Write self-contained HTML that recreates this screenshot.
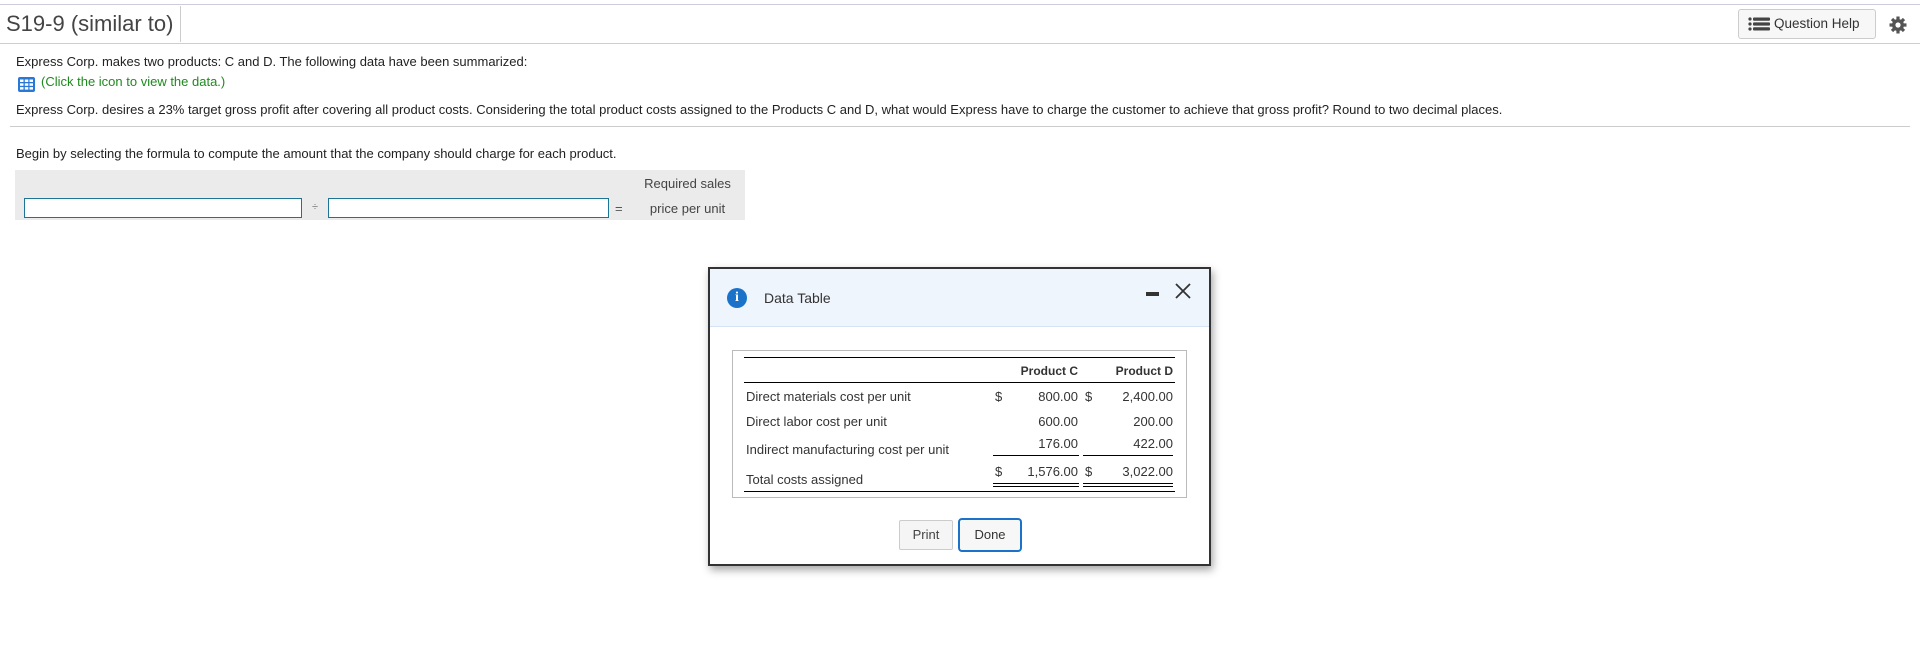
<!DOCTYPE html>
<html><head><meta charset="utf-8"><style>
*{margin:0;padding:0;box-sizing:border-box}
body{width:1920px;height:652px;background:#fff;font-family:"Liberation Sans",Arial,sans-serif;color:#222;position:relative;overflow:hidden}
.a{position:absolute;white-space:nowrap}
.t{font-size:13px;line-height:16px}
.r{text-align:right}
</style></head><body>
<div class="a" style="left:0;top:4px;width:1920px;height:1px;background:#ccd"></div>
<div class="a" style="left:0;top:43px;width:1920px;height:1px;background:#ccd"></div>
<div class="a" style="left:6px;top:11px;font-size:22px;color:#444;line-height:26px">S19-9 (similar to)</div>
<div class="a" style="left:180px;top:6px;width:1px;height:36px;background:#ccc"></div>
<div class="a" style="left:1738px;top:9px;width:138px;height:30px;border:1px solid #ccc;border-radius:3px;background:#f7f7f7"></div>
<svg class="a" style="left:1748px;top:17px" width="22" height="14"><g fill="#444"><circle cx="2" cy="2" r="1.6"/><circle cx="2" cy="7" r="1.6"/><circle cx="2" cy="12" r="1.6"/><rect x="5" y="0.5" width="17" height="3.2" rx="1"/><rect x="5" y="5.4" width="17" height="3.2" rx="1"/><rect x="5" y="10.3" width="17" height="3.2" rx="1"/></g></svg>
<div class="a" style="left:1774px;top:16px;font-size:13.5px;color:#333;line-height:16px">Question Help</div>
<svg class="a" style="left:1889px;top:16px" width="18" height="18" viewBox="0 0 18 18"><g fill="#555"><circle cx="9" cy="9" r="6"/><g stroke="#555" stroke-width="3.2"><line x1="9" y1="0.5" x2="9" y2="17.5"/><line x1="0.5" y1="9" x2="17.5" y2="9"/><line x1="3" y1="3" x2="15" y2="15"/><line x1="15" y1="3" x2="3" y2="15"/></g></g><circle cx="9" cy="9" r="2.6" fill="#fff"/></svg>

<div class="a t" style="left:16px;top:54px">Express Corp. makes two products: C and D. The following data have been summarized:</div>
<svg class="a" style="left:18px;top:77px" width="17" height="15"><rect width="17" height="15" rx="2" fill="#2a78d6"/><g fill="#fff"><rect x="2" y="2.5" width="3.5" height="2.5"/><rect x="6.8" y="2.5" width="3.5" height="2.5"/><rect x="11.5" y="2.5" width="3.5" height="2.5"/><rect x="2" y="6.3" width="3.5" height="2.5"/><rect x="6.8" y="6.3" width="3.5" height="2.5"/><rect x="11.5" y="6.3" width="3.5" height="2.5"/><rect x="2" y="10.1" width="3.5" height="2.5"/><rect x="6.8" y="10.1" width="3.5" height="2.5"/><rect x="11.5" y="10.1" width="3.5" height="2.5"/></g></svg>
<div class="a t" style="left:41px;top:74px;color:#1e8a1e">(Click the icon to view the data.)</div>
<div class="a t" style="left:16px;top:102px">Express Corp. desires a 23% target gross profit after covering all product costs. Considering the total product costs assigned to the Products C and D, what would Express have to charge the customer to achieve that gross profit? Round to two decimal places.</div>
<div class="a" style="left:10px;top:126px;width:1900px;height:1px;background:#ccc"></div>
<div class="a t" style="left:16px;top:146px">Begin by selecting the formula to compute the amount that the company should charge for each product.</div>
<div class="a" style="left:15px;top:170px;width:730px;height:50px;background:#ebebeb"></div>
<div class="a t" style="left:630px;top:176px;width:115px;text-align:center;color:#444">Required sales</div>
<div class="a t" style="left:630px;top:201px;width:115px;text-align:center;color:#444">price per unit</div>
<div class="a" style="left:24px;top:198px;width:278px;height:20px;border:1px solid #1d7596;background:#fff"></div>
<div class="a" style="left:312px;top:201px;font-size:11px;color:#777">÷</div>
<div class="a" style="left:328px;top:198px;width:281px;height:20px;border:1px solid #1d7596;background:#fff"></div>
<div class="a t" style="left:615px;top:201px;color:#555">=</div>

<div class="a" style="left:708px;top:267px;width:503px;height:299px;border:2px solid #333;background:#fff;box-shadow:2px 4px 8px rgba(0,0,0,.35)"></div>
<div class="a" style="left:710px;top:269px;width:499px;height:58px;background:#eff5fd;border-bottom:1px solid #d4e3f3"></div>
<div class="a" style="left:727px;top:288px;width:20px;height:20px;border-radius:50%;background:#1a73c8;color:#fff;font:bold 14px/20px 'Liberation Serif',serif;text-align:center">i</div>
<div class="a" style="left:764px;top:290px;font-size:14px;line-height:16px;color:#333">Data Table</div>
<div class="a" style="left:1146px;top:292px;width:13px;height:4px;background:#333"></div>
<svg class="a" style="left:1175px;top:283px" width="16" height="16"><path d="M1 1L15 15M15 1L1 15" stroke="#333" stroke-width="1.8"/></svg>

<div class="a" style="left:732px;top:350px;width:455px;height:148px;border:1px solid #bbb"></div>
<div class="a" style="left:744px;top:357px;width:431px;height:1px;background:#000"></div>
<div class="a" style="left:744px;top:382px;width:431px;height:1px;background:#000"></div>
<div class="a" style="left:744px;top:491px;width:431px;height:1px;background:#000"></div>
<div class="a t r" style="left:990px;top:363px;width:88px;font-weight:bold;color:#333;font-size:12px">Product C</div>
<div class="a t r" style="left:1085px;top:363px;width:88px;font-weight:bold;color:#333;font-size:12px">Product D</div>
<div class="a t" style="left:746px;top:389px;color:#333">Direct materials cost per unit</div>
<div class="a t" style="left:746px;top:414px;color:#333">Direct labor cost per unit</div>
<div class="a t" style="left:746px;top:442px;color:#333">Indirect manufacturing cost per unit</div>
<div class="a t" style="left:746px;top:472px;color:#333">Total costs assigned</div>
<div class="a t" style="left:995px;top:389px;color:#333">$</div>
<div class="a t" style="left:1085px;top:389px;color:#333">$</div>
<div class="a t" style="left:995px;top:464px;color:#333">$</div>
<div class="a t" style="left:1085px;top:464px;color:#333">$</div>
<div class="a t r" style="left:1000px;top:389px;width:78px;color:#333">800.00</div>
<div class="a t r" style="left:1095px;top:389px;width:78px;color:#333">2,400.00</div>
<div class="a t r" style="left:1000px;top:414px;width:78px;color:#333">600.00</div>
<div class="a t r" style="left:1095px;top:414px;width:78px;color:#333">200.00</div>
<div class="a t r" style="left:1000px;top:436px;width:78px;color:#333">176.00</div>
<div class="a t r" style="left:1095px;top:436px;width:78px;color:#333">422.00</div>
<div class="a t r" style="left:1000px;top:464px;width:78px;color:#333">1,576.00</div>
<div class="a t r" style="left:1095px;top:464px;width:78px;color:#333">3,022.00</div>
<div class="a" style="left:993px;top:455px;width:86px;height:1px;background:#000"></div>
<div class="a" style="left:1083px;top:455px;width:90px;height:1px;background:#000"></div>
<div class="a" style="left:993px;top:483px;width:86px;height:4px;border-top:1px solid #000;border-bottom:1px solid #000"></div>
<div class="a" style="left:1083px;top:483px;width:90px;height:4px;border-top:1px solid #000;border-bottom:1px solid #000"></div>

<div class="a" style="left:899px;top:520px;width:54px;height:30px;border:1px solid #ccc;border-radius:2px;background:#f5f5f5;font-size:13px;line-height:28px;text-align:center;color:#444">Print</div>
<div class="a" style="left:958px;top:518px;width:64px;height:34px;border:2px solid #1a73c8;border-radius:4px;background:#f7f7f7;font-size:13px;line-height:30px;text-align:center;color:#333">Done</div>
</body></html>
